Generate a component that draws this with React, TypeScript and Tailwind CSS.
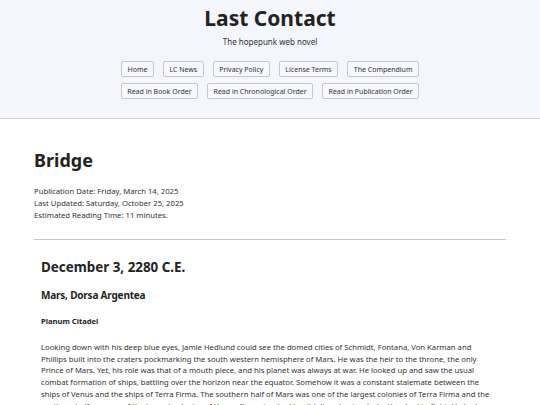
import React from "react";

const navRow1 = ["Home", "LC News", "Privacy Policy", "License Terms", "The Compendium"];
const navRow2 = ["Read in Book Order", "Read in Chronological Order", "Read in Publication Order"];

const lines = [
  "Looking down with his deep blue eyes, Jamie Hedlund could see the domed cities of Schmidt, Fontana, Von Karman and",
  "Phillips built into the craters pockmarking the south western hemisphere of Mars. He was the heir to the throne, the only",
  "Prince of Mars. Yet, his role was that of a mouth piece, and his planet was always at war. He looked up and saw the usual",
  "combat formation of ships, battling over the horizon near the equator. Somehow it was a constant stalemate between the",
  "ships of Venus and the ships of Terra Firma. The southern half of Mars was one of the largest colonies of Terra Firma and the",
  "northern half was one of the largest colonies of Venus. It was too bad he didn't understand why they had to fight. He had",
  "never been told the reason, only that the war had lasted longer than he had been alive.",
];

function NavButton({ label }: { label: string }) {
  return (
    <a className="flex h-[16px] items-center rounded-[2px] border border-[#c4c7cf] bg-[#f7f8fc] px-[5.5px] text-[7px] leading-none text-[#333]">
      {label}
    </a>
  );
}

export default function App() {
  return (
    <div className="min-h-[405px] bg-white text-[#222]" style={{ fontFamily: '"Noto Sans", sans-serif' }}>
      <header className="flex flex-col items-center border-b border-[#cfd2d8] bg-[#f4f6fc] pb-[19px] pt-[5px]">
        <h1 className="text-[21px] font-bold leading-[26px] text-[#222]">Last Contact</h1>
        <p className="mt-[5px] text-[8px] leading-[12px] text-[#333]">The hopepunk web novel</p>
        <nav className="mt-[13px] flex flex-col items-center gap-[6px]">
          <div className="flex gap-[9px]">
            {navRow1.map((l) => (
              <NavButton key={l} label={l} />
            ))}
          </div>
          <div className="flex gap-[9px]">
            {navRow2.map((l) => (
              <NavButton key={l} label={l} />
            ))}
          </div>
        </nav>
      </header>
      <main className="px-[34px] pt-[28px]">
        <h2 className="text-[18px] font-bold leading-[26px] text-[#222]">Bridge</h2>
        <div className="mt-[12px] text-[7.7px] leading-[12px] text-[#333]">
          <p>Publication Date: Friday, March 14, 2025</p>
          <p>Last Updated: Saturday, October 25, 2025</p>
          <p>Estimated Reading Time: 11 minutes.</p>
        </div>
        <hr className="mt-[18px] border-t border-[#c8c8c8]" />
        <article className="px-[7px] pt-[17px]">
          <h3 className="text-[13.4px] font-bold leading-[20px] text-[#222]">December 3, 2280 C.E.</h3>
          <h4 className="mt-[10px] text-[10px] font-bold leading-[16px] tracking-[-0.2px] text-[#222]">Mars, Dorsa Argentea</h4>
          <h5 className="mt-[12px] text-[7.6px] font-bold leading-[12px] text-[#222]">Planum Citadel</h5>
          <p className="mt-[15px] text-[7.7px] leading-[11.7px] text-[#333]">
            {lines.map((l, i) => (
              <span key={i} className="block whitespace-nowrap">
                {l}
              </span>
            ))}
          </p>
        </article>
      </main>
    </div>
  );
}
